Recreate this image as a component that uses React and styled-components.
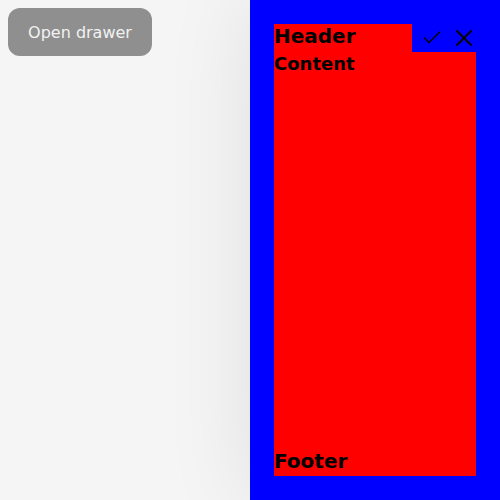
import React from 'react';
import styled, { createGlobalStyle } from 'styled-components';

const GlobalStyle = createGlobalStyle`
  html, body {
    margin: 0;
    height: 100%;
    background: #f5f5f5;
    font-family: "DejaVu Sans", sans-serif;
  }
`;

const Page = styled.div`
  height: 500px;
  padding: 8px;
  box-sizing: border-box;
`;

const OpenButton = styled.button`
  width: 144px;
  height: 48px;
  border: none;
  border-radius: 12px;
  background: #8f8f8f;
  color: #f2f2f2;
  font-family: "DejaVu Sans", sans-serif;
  font-size: 16px;
  padding: 0;
  cursor: pointer;
`;

const Drawer = styled.aside`
  position: fixed;
  top: 0;
  right: 0;
  bottom: 0;
  width: 250px;
  box-sizing: border-box;
  padding: 24px;
  background: #0000ff;
  box-shadow: 0 0 90px rgba(0, 0, 0, 0.09);
  display: flex;
  flex-direction: column;
  color: #000;
`;

const HeaderRow = styled.div`
  display: flex;
  height: 28px;
`;

const Title = styled.h2`
  flex: 1;
  margin: 0;
  background: #ff0000;
  font-size: 20px;
  font-weight: bold;
`;

const Actions = styled.div`
  display: flex;
  gap: 8px;
  padding-left: 8px;
`;

const IconButton = styled.button`
  width: 24px;
  height: 28px;
  padding: 0;
  border: none;
  background: transparent;
  display: flex;
  align-items: center;
  justify-content: center;
  color: #000;
  cursor: pointer;
`;

const Body = styled.div`
  flex: 1;
  background: #ff0000;
  display: flex;
  flex-direction: column;
  justify-content: space-between;
`;

const Content = styled.p`
  margin: 0;
  padding-top: 1px;
  font-size: 18px;
  font-weight: bold;
`;

const Footer = styled.footer`
  font-size: 20px;
  font-weight: bold;
  padding-bottom: 3px;
`;

const CheckIcon = () => (
  <svg width="18" height="14" viewBox="0 0 18 14" fill="none" stroke="currentColor" strokeWidth="1.5">
    <path d="M1 6.5 L6 11.5 L17 0.8" />
  </svg>
);

const CloseIcon = () => (
  <svg width="18" height="18" viewBox="0 0 18 18" fill="none" stroke="currentColor" strokeWidth="2">
    <path d="M1.5 1.5 L16.5 16.5 M16.5 1.5 L1.5 16.5" />
  </svg>
);

export default function App() {
  return (
    <Page>
      <GlobalStyle />
      <OpenButton>Open drawer</OpenButton>
      <Drawer>
        <HeaderRow>
          <Title>Header</Title>
          <Actions>
            <IconButton aria-label="Confirm"><CheckIcon /></IconButton>
            <IconButton aria-label="Close"><CloseIcon /></IconButton>
          </Actions>
        </HeaderRow>
        <Body>
          <Content>Content</Content>
          <Footer>Footer</Footer>
        </Body>
      </Drawer>
    </Page>
  );
}
